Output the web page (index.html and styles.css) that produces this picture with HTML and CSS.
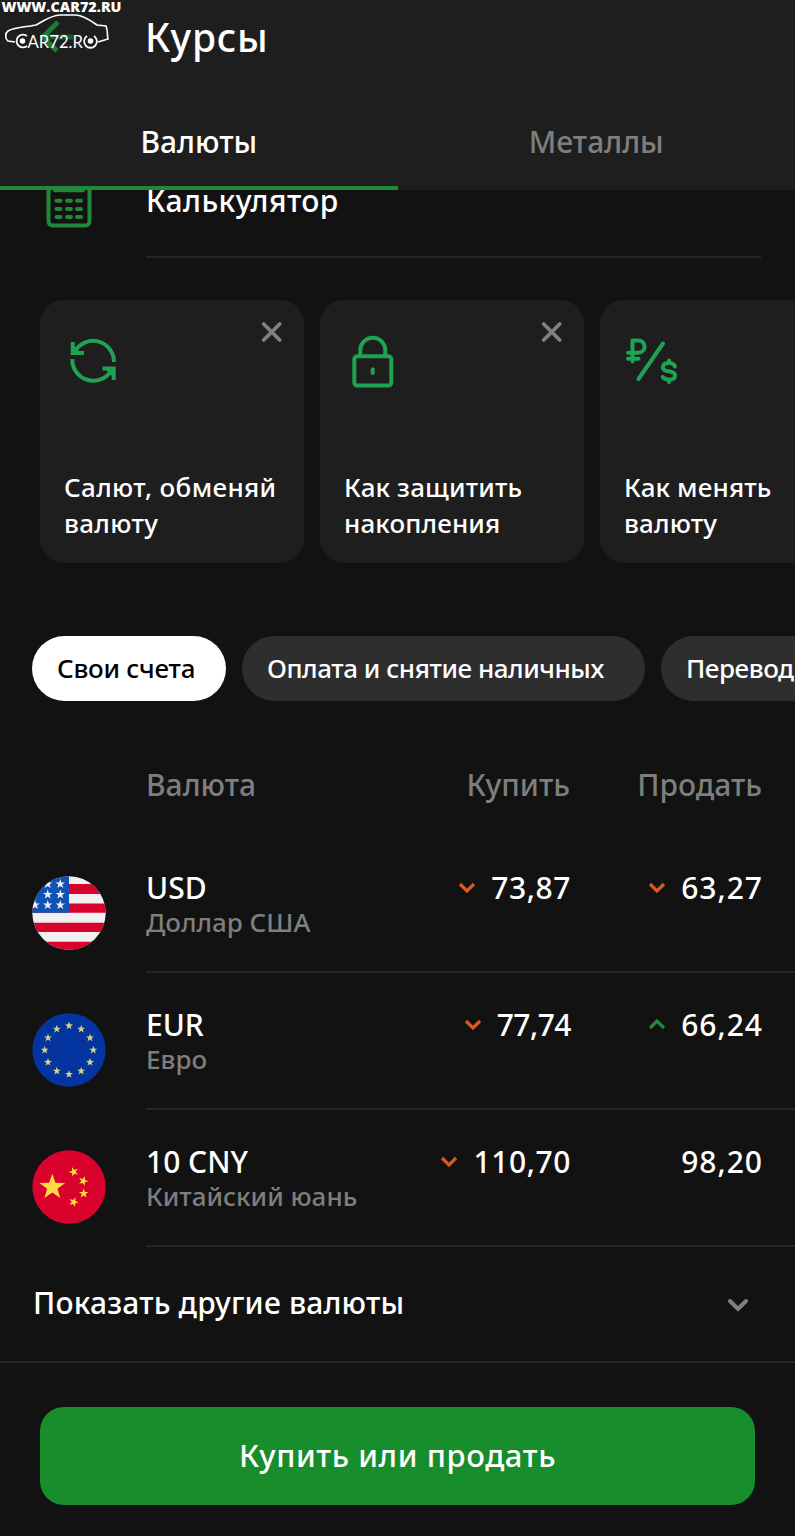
FILE: index.html
```html
<!DOCTYPE html>
<html lang="ru">
<head>
    <meta charset="UTF-8">
    <meta name="viewport" content="width=device-width, initial-scale=1.0">
    <title>Курсы</title>
    <link rel="stylesheet" href="styles.css">
</head>
<body>
    <svg class="defs" width="0" height="0">
        <defs>
            <polygon id="star" points="0,-10 2.35,-3.24 9.51,-3.09 3.8,1.24 5.88,8.09 0,4 -5.88,8.09 -3.8,1.24 -9.51,-3.09 -2.35,-3.24"/>
            <clipPath id="round"><circle cx="37" cy="37" r="36.7"/></clipPath>
        </defs>
    </svg>
    <header>
        <svg class="logo" width="130" height="60" viewBox="0 0 130 60">
            <path d="M43 37 H73" fill="none" stroke="#1b5a2b" stroke-width="5"/>
            <path d="M58 22 L43 37 L57 51" fill="none" stroke="#1d7a35" stroke-width="5"/>
            <path d="M15 42 L8 41 C5 39 5 33 8 31 C15 27 27 27 36 25 C45 20 52 15 60 15 H76 C85 16 91 21 97 25 L106 26 C108 31 107 35 108 39 L98 42" fill="none" stroke="#fff" stroke-width="1.6"/>
            <text class="site" x="1.5" y="11.5" textLength="120" lengthAdjust="spacingAndGlyphs">WWW.CAR72.RU</text>
            <text class="plate" x="27.5" y="47.5" textLength="55.5" lengthAdjust="spacingAndGlyphs">AR72.R</text>
            <path d="M27 36 A6.4 6.4 0 1 0 27 46" fill="none" stroke="#fff" stroke-width="1.8"/>
            <circle cx="22.5" cy="41" r="2.8" fill="#fff"/>
            <path d="M87 36 A6.4 6.4 0 1 0 94 36" fill="none" stroke="#fff" stroke-width="1.8"/>
            <circle cx="90.5" cy="41" r="2.8" fill="#fff"/>
        </svg>
        <h1>Курсы</h1>
        <nav class="tabs">
            <a class="tab active">Валюты</a>
            <a class="tab">Металлы</a>
        </nav>
    </header>
    <main>
        <div class="calc">
            <svg width="46" height="56" viewBox="0 0 46 56" fill="none" stroke="#21873a" stroke-width="4">
                <rect x="2.5" y="2" width="41" height="51.5" rx="4"/>
                <path d="M9 18.3 H37" stroke-linecap="round"/>
                <g stroke-linecap="round" stroke-width="4">
                    <path d="M10.5 28.7 h4 M21 28.7 h4 M31 28.7 h4 M10.5 37 h4 M21 37 h4 M31 37 h4 M10.5 45 h4 M21 45 h4 M31 45 h4"/>
                </g>
            </svg>
            <div class="calc_text">Калькулятор</div>
        </div>

        <div class="cards">
            <div class="card first">
                <svg class="icon" width="56" height="64" viewBox="0 0 56 64">
                    <path d="M11 27 A21 21 0 0 1 50 38"/>
                    <path d="M8.7 18 V29 H20"/>
                    <path d="M8.3 35 A21 21 0 0 0 47 47"/>
                    <path d="M49.7 56 V44.5 H38.5"/>
                    <path class="fill" d="M9 21 L17 29 H9 Z M49 53 L41 45 H49 Z"/>
                </svg>
                <svg class="close" width="24" height="24" viewBox="0 0 24 24"><path d="M3.7 4 L19.7 20 M19.7 4 L3.7 20"/></svg>
                <p>Салют, обменяй<br>валюту</p>
            </div>
            <div class="card">
                <svg class="icon" width="56" height="64" viewBox="0 0 56 64">
                    <rect x="10.3" y="32.3" width="37" height="29.3" rx="3"/>
                    <path d="M16.3 32 V26.2 A12.5 12.5 0 0 1 41.3 26.2 V32"/>
                    <path d="M28.7 45.3 V49" stroke-linecap="round"/>
                </svg>
                <svg class="close" width="24" height="24" viewBox="0 0 24 24"><path d="M3.7 4 L19.7 20 M19.7 4 L3.7 20"/></svg>
                <p>Как защитить<br>накопления</p>
            </div>
            <div class="card">
                <svg class="icon thin" width="56" height="64" viewBox="0 0 56 64">
                    <path d="M8.5 37.5 V16.5 H14.5 A6 6 0 0 1 14.5 28.7 H4 M4 34.7 H14.5"/>
                    <path d="M14.5 55 L39 19.5"/>
                    <path d="M51 42.5 C50 39.5 47.5 39 45 39 C37.5 39 37 46 43 47 L47 47.8 C53.5 49 52 55.7 45.5 55.7 C42 55.7 40 55 38.7 53 M45 36.5 V39 M45 55.7 V58"/>
                </svg>
                <p>Как менять<br>валюту</p>
            </div>
        </div>

        <div class="chips">
            <button class="chip selected">Свои счета</button>
            <button class="chip wide">Оплата и снятие наличных</button>
            <button class="chip">Переводы</button>
        </div>

        <div class="rates">
            <div class="head">
                <div class="name">Валюта</div>
                <div class="buy">Купить</div>
                <div class="sell">Продать</div>
            </div>
            <div class="row">
                <svg class="flag" width="74" height="74" viewBox="0 0 74 74">
                    <g clip-path="url(#round)">
                        <rect width="74" height="74" fill="#f0f0f0"/>
                        <path fill="#d8022c" d="M0 8 H74 V18 H0 Z M0 27.5 H74 V36.8 H0 Z M0 46.7 H74 V56 H0 Z M0 65.7 H74 V74 H0 Z"/>
                        <rect width="37" height="36.8" fill="#0f52b5"/>
                        <g fill="#f0f0f0">
                            <use href="#star" transform="translate(15.7 8) scale(.5)"/>
                            <use href="#star" transform="translate(28.3 8) scale(.5)"/>
                            <use href="#star" transform="translate(15.7 18.5) scale(.5)"/>
                            <use href="#star" transform="translate(28.3 18.5) scale(.5)"/>
                            <use href="#star" transform="translate(3 29) scale(.5)"/>
                            <use href="#star" transform="translate(15.7 29) scale(.5)"/>
                            <use href="#star" transform="translate(28.3 29) scale(.5)"/>
                        </g>
                    </g>
                </svg>
                <div class="info">
                    <div class="name"><b>USD</b><small>Доллар США</small></div>
                    <div class="buy"><svg class="arrow down" width="18" height="12" viewBox="0 0 18 12"><path d="M2 2 L9 9 L16 2"/></svg>73,87</div>
                    <div class="sell"><svg class="arrow down" width="18" height="12" viewBox="0 0 18 12"><path d="M2 2 L9 9 L16 2"/></svg>63,27</div>
                </div>
            </div>
            <div class="row">
                <svg class="flag" width="74" height="74" viewBox="0 0 74 74">
                    <circle cx="37" cy="37" r="36.7" fill="#0334a0"/>
                    <g fill="#d8d67c">
                        <use href="#star" transform="translate(37 12.7) scale(.42)"/>
                        <use href="#star" transform="translate(49.2 16) scale(.42)"/>
                        <use href="#star" transform="translate(58 24.8) scale(.42)"/>
                        <use href="#star" transform="translate(61.3 37) scale(.42)"/>
                        <use href="#star" transform="translate(58 49.2) scale(.42)"/>
                        <use href="#star" transform="translate(49.2 58) scale(.42)"/>
                        <use href="#star" transform="translate(37 61.3) scale(.42)"/>
                        <use href="#star" transform="translate(24.8 58) scale(.42)"/>
                        <use href="#star" transform="translate(16 49.2) scale(.42)"/>
                        <use href="#star" transform="translate(12.7 37) scale(.42)"/>
                        <use href="#star" transform="translate(16 24.8) scale(.42)"/>
                        <use href="#star" transform="translate(24.8 16) scale(.42)"/>
                    </g>
                </svg>
                <div class="info">
                    <div class="name"><b>EUR</b><small>Евро</small></div>
                    <div class="buy tight"><svg class="arrow down" width="18" height="12" viewBox="0 0 18 12"><path d="M2 2 L9 9 L16 2"/></svg>77,74</div>
                    <div class="sell"><svg class="arrow up" width="18" height="12" viewBox="0 0 18 12"><path d="M2 9 L9 2 L16 9"/></svg>66,24</div>
                </div>
            </div>
            <div class="row">
                <svg class="flag" width="74" height="74" viewBox="0 0 74 74">
                    <circle cx="37" cy="37" r="36.7" fill="#d8022c"/>
                    <g fill="#ffda44">
                        <use href="#star" transform="translate(20.3 37.2) scale(1.35)"/>
                        <use href="#star" transform="translate(41.7 21.8) rotate(-20) scale(.5)"/>
                        <use href="#star" transform="translate(51.3 31) rotate(20) scale(.5)"/>
                        <use href="#star" transform="translate(51.7 43.5) scale(.5)"/>
                        <use href="#star" transform="translate(41.7 52) rotate(20) scale(.5)"/>
                    </g>
                </svg>
                <div class="info">
                    <div class="name"><b>10 CNY</b><small>Китайский юань</small></div>
                    <div class="buy"><svg class="arrow down" width="18" height="12" viewBox="0 0 18 12"><path d="M2 2 L9 9 L16 2"/></svg>110,70</div>
                    <div class="sell">98,20</div>
                </div>
            </div>
        </div>
        <div class="more">
            Показать другие валюты
            <svg width="22" height="14" viewBox="0 0 22 14"><path d="M3 3 L11 11 L19 3"/></svg>
        </div>
    </main>
    <footer>
        <button class="main_btn">Купить или продать</button>
    </footer>
</body>
</html>
```
FILE: styles.css
```css
*{
    box-sizing: border-box;
}
body{
    margin: 0;
    background: #121212;
    color: #fff;
    font-family: "Noto Sans", sans-serif;
    font-size: 30px;
    font-weight: 500;
}
.defs{
    position: absolute;
}
header{
    position: relative;
    z-index: 1;
    height: 190px;
    background: #1e1e1e;
}
.logo{
    position: absolute;
    left: 0;
    top: 0;
}
.site{
    font: 800 13.5px "Open Sans", sans-serif;
    fill: #fff;
}
.plate{
    font: 400 17px Lato, sans-serif;
    fill: #fff;
}
h1{
    margin: 0 0 20px;
    padding-left: 145px;
    font-size: 39px;
    font-weight: 500;
    line-height: 73px;
    height: 72px;
    letter-spacing: .8px;
}
.tabs{
    display: flex;
    height: 98px;
    line-height: 100px;
    text-align: center;
}
.tab{
    flex: 1;
    color: #7e7e7e;
}
.tab.active{
    color: #fff;
    border-bottom: 4px solid #21873a;
}
main{
    margin-top: -48px;
    overflow: hidden;
}
.calc{
    display: flex;
    align-items: center;
    height: 116px;
    padding: 0 34px 0 46px;
}
.calc_text{
    flex: 1;
    height: 116px;
    margin-left: 54px;
    line-height: 118px;
    letter-spacing: .45px;
    border-bottom: 2px solid #252525;
}
.cards{
    display: flex;
    gap: 16px;
    margin: 42px 0 0 40px;
}
.card{
    position: relative;
    display: flex;
    flex-direction: column;
    justify-content: space-between;
    flex: none;
    width: 264px;
    height: 263px;
    padding: 24px 0 22px 24px;
    border-radius: 24px;
    background: #1e1e1e;
    font-size: 26px;
    line-height: 36px;
    letter-spacing: .15px;
}
.card.first{
    letter-spacing: .35px;
}
.icon{
    display: block;
    fill: none;
    stroke: #1fa253;
    stroke-width: 4;
}
.icon .fill{
    fill: #1fa253;
    stroke: none;
}
.icon.thin{
    stroke-linecap: round;
    stroke-linejoin: round;
}
.close{
    position: absolute;
    right: 20px;
    top: 20px;
    stroke: #808080;
    stroke-width: 3.8;
    stroke-linecap: round;
}
.card p{
    margin: 0;
    white-space: nowrap;
}
.chips{
    display: flex;
    gap: 16px;
    margin: 73px 0 0 32px;
}
.chip{
    flex: none;
    height: 65px;
    padding: 0 25px 2px;
    border: 0;
    border-radius: 33px;
    background: #2e2e2e;
    color: #fff;
    font: 500 26px "Noto Sans", sans-serif;
    letter-spacing: -.45px;
    text-align: left;
}
.chip.selected{
    width: 194px;
    background: #fff;
    color: #000;
    letter-spacing: -.25px;
}
.chip.wide{
    width: 403px;
}
.head{
    display: flex;
    margin-top: 62px;
    padding: 0 33px 0 146px;
    height: 73px;
    line-height: 44px;
    color: #7e7e7e;
}
.name{
    flex: 1;
}
.name b, .name small{
    display: block;
    font-weight: 500;
}
.name small{
    font-size: 26px;
    line-height: 28px;
    color: #7e7e7e;
}
.buy, .sell{
    text-align: right;
}
.sell{
    width: 192px;
}
.row{
    display: flex;
    height: 137px;
    padding-left: 32px;
}
.flag{
    margin: 40px 40px 0 0;
}
.info{
    display: flex;
    flex: 1;
    padding: 32px 32px 0 0;
    line-height: 40px;
    border-bottom: 2px solid #252525;
}
.info .buy{
    letter-spacing: .6px;
}
.info .buy.tight{
    letter-spacing: -.5px;
}
.info .sell{
    letter-spacing: 1px;
}
.arrow{
    margin-right: 15px;
    vertical-align: 5px;
    fill: none;
    stroke-width: 3.2;
}
.down{
    stroke: #d9591f;
}
.up{
    stroke: #21873a;
}
.more{
    display: flex;
    align-items: center;
    justify-content: space-between;
    height: 114px;
    padding: 0 46px 4px 33px;
    letter-spacing: .18px;
}
.more svg{
    margin-top: 6px;
    fill: none;
    stroke: #808080;
    stroke-width: 4;
    stroke-linecap: round;
}
footer{
    height: 175px;
    padding: 44px 40px 0;
    border-top: 2px solid #252525;
}
.main_btn{
    width: 715px;
    height: 98px;
    padding-bottom: 3px;
    border: 0;
    border-radius: 24px;
    background: #178e2b;
    color: #fff;
    font: 500 31px "Noto Sans", sans-serif;
    letter-spacing: .6px;
}
```
